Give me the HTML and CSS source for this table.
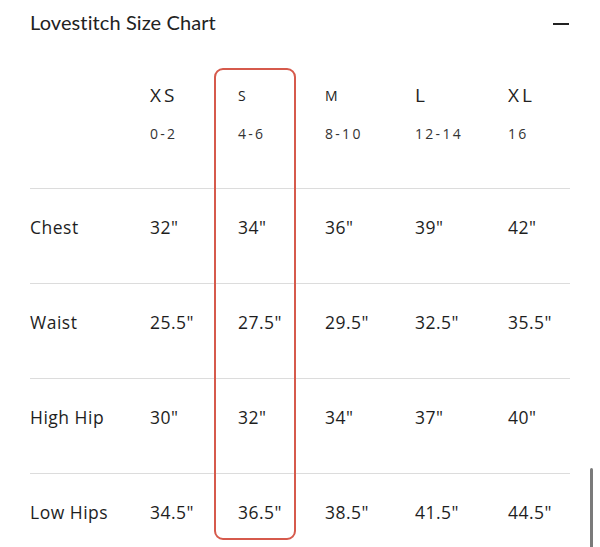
FILE: index.html
```html
<!DOCTYPE html>
<html>
<head>
<meta charset="utf-8">
<link rel="stylesheet" href="styles.css">
</head>
<body>
<div class="page">
  <header class="head">
    <h1 class="title">Lovestitch Size Chart</h1>
    <span class="minus"></span>
  </header>
  <div class="chart">
    <div class="highlight"></div>
    <div class="row row-head">
      <div class="cell"></div>
      <div class="cell"><span class="size big">XS</span><span class="num">0-2</span></div>
      <div class="cell"><span class="size small">S</span><span class="num">4-6</span></div>
      <div class="cell"><span class="size small">M</span><span class="num">8-10</span></div>
      <div class="cell"><span class="size big">L</span><span class="num">12-14</span></div>
      <div class="cell"><span class="size big">XL</span><span class="num">16</span></div>
    </div>
    <div class="row">
      <div class="cell label">Chest</div>
      <div class="cell">32"</div><div class="cell">34"</div><div class="cell">36"</div><div class="cell">39"</div><div class="cell">42"</div>
    </div>
    <div class="row">
      <div class="cell label">Waist</div>
      <div class="cell">25.5"</div><div class="cell">27.5"</div><div class="cell">29.5"</div><div class="cell">32.5"</div><div class="cell">35.5"</div>
    </div>
    <div class="row">
      <div class="cell label">High Hip</div>
      <div class="cell">30"</div><div class="cell">32"</div><div class="cell">34"</div><div class="cell">37"</div><div class="cell">40"</div>
    </div>
    <div class="row last">
      <div class="cell label">Low Hips</div>
      <div class="cell">34.5"</div><div class="cell">36.5"</div><div class="cell">38.5"</div><div class="cell">41.5"</div><div class="cell">44.5"</div>
    </div>
  </div>
  <div class="scrollbar"></div>
</div>
</body>
</html>
```
FILE: styles.css
```css
* { box-sizing: border-box; }
html, body { margin: 0; padding: 0; background: #fff; }
body { width: 600px; height: 547px; overflow: hidden; }
.page {
  position: relative;
  width: 600px;
  height: 547px;
  padding: 0 30px;
  color: #1e1e1e;
  font-family: "Open Sans", "Liberation Sans", sans-serif;
}
.head {
  height: 68px;
  display: flex;
  justify-content: space-between;
  align-items: flex-start;
  padding-top: 9px;
}
.title {
  margin: 0;
  font-family: "Lato", "Open Sans", sans-serif;
  font-weight: 400;
  font-size: 20px;
  line-height: 26px;
  color: #222;
  letter-spacing: 0.1px;
}
.minus {
  width: 16px;
  height: 2px;
  background: #222;
  margin-top: 14px;
  margin-right: 1px;
}
.chart {
  position: relative;
  width: 540px;
}
.row {
  display: grid;
  grid-template-columns: 120px 88px 87px 90px 93px 1fr;
  height: 95px;
  align-items: start;
  padding-top: 26px;
  border-top: 1px solid #dcdcdc;
  font-size: 17.5px;
  line-height: 24px;
  letter-spacing: 0.5px;
}
.row-head {
  height: 120px;
  border-top: none;
  padding-top: 16px;
}
.row-head .cell {
  display: flex;
  flex-direction: column;
}
.size {
  height: 22px;
  display: flex;
  align-items: center;
  color: #222;
}
.size.big { font-size: 19px; letter-spacing: 3px; }
.size.small { font-size: 14px; letter-spacing: 1px; padding-top: 2px; }
.num {
  margin-top: 18px;
  font-size: 14px;
  line-height: 20px;
  letter-spacing: 2.3px;
  color: #333;
}
.cell { white-space: nowrap; }
.label { color: #1e1e1e; }
.highlight {
  position: absolute;
  left: 184px;
  top: 0;
  width: 82px;
  height: 472px;
  border: 2px solid #d65a4c;
  border-radius: 9px;
  pointer-events: none;
}
.scrollbar {
  position: absolute;
  left: 590px;
  top: 468px;
  width: 3px;
  height: 90px;
  border-radius: 2px;
  background: #7a7a7a;
}
```
